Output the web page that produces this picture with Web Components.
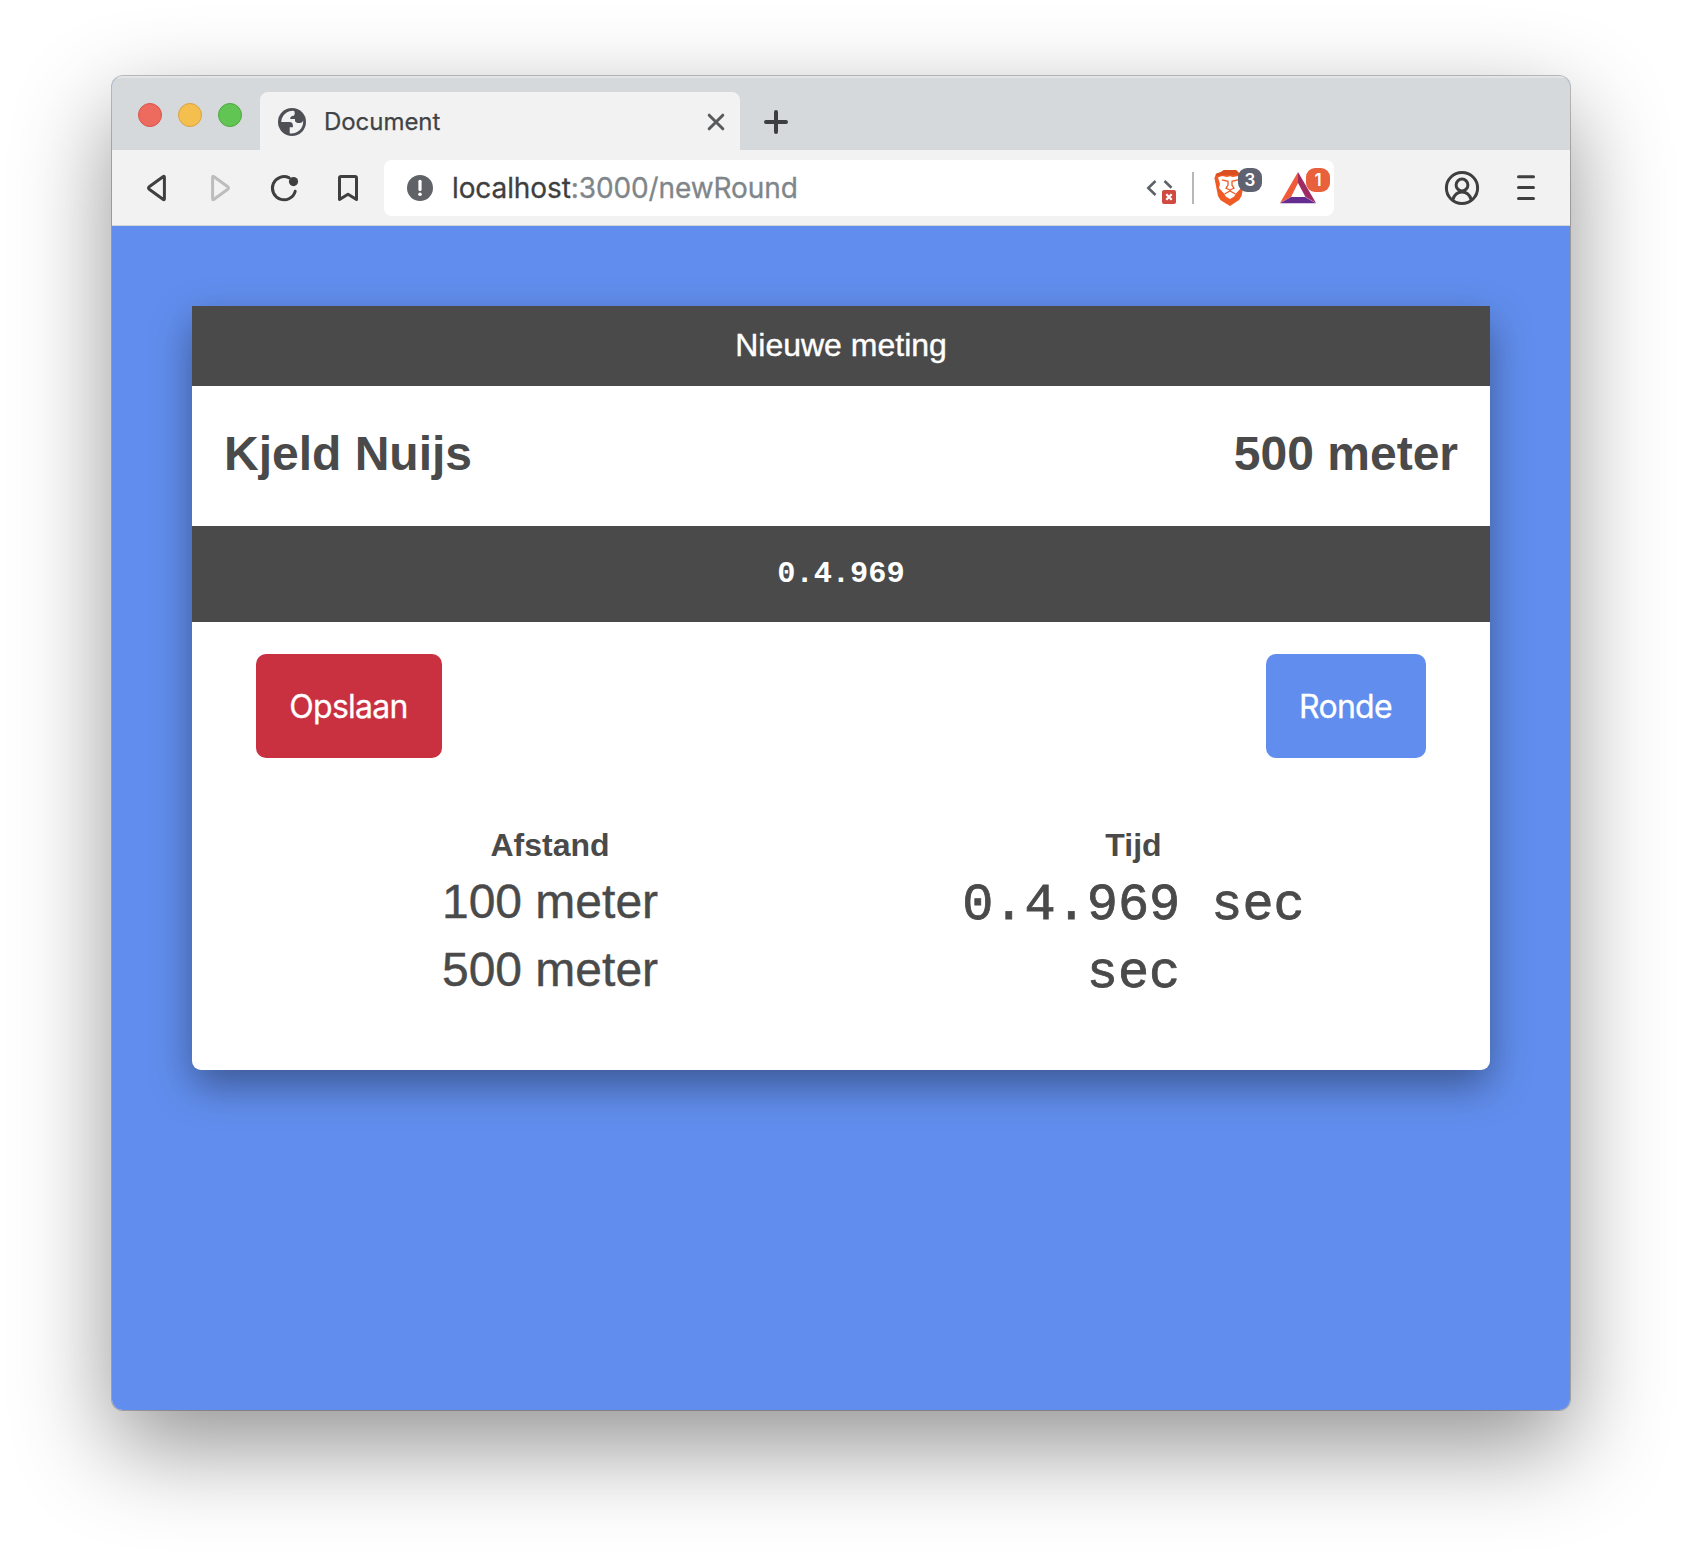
<!DOCTYPE html>
<html lang="nl">
<head>
<meta charset="utf-8">
<title>Document</title>
<style>
body{margin:0;background:#fff;font-family:"Liberation Sans",Arial,sans-serif}
</style>
</head>
<body>
<browser-window>
  <title-bar slot="chrome"><browser-tab>Document</browser-tab></title-bar>
  <tool-bar slot="chrome"><address-field host="localhost" path=":3000/newRound"></address-field></tool-bar>
  <round-card heading="Nieuwe meting" skater="Kjeld Nuijs" distance="500 meter" time="0.4.969">
    <action-button slot="actions" style="--w:186px;--bg:#c93141;--ls:-.75px">Opslaan</action-button>
    <action-button slot="actions" style="--w:160px;--bg:#618eee;--ls:-.7px">Ronde</action-button>
    <lap-table slot="laps"></lap-table>
  </round-card>
</browser-window>
<script>
const define=(name,html)=>customElements.define(name,class extends HTMLElement{
  constructor(){
    super();
    const t=document.createElement('template');
    t.innerHTML='<style>*{box-sizing:border-box}svg{display:block;flex:none}</style>'+html;
    this.attachShadow({mode:'open'}).append(t.content.cloneNode(true));
  }
  connectedCallback(){
    this.shadowRoot.querySelectorAll('[data-attr]').forEach(e=>{e.textContent=this.getAttribute(e.dataset.attr)});
  }
});

define('browser-window',`<style>
:host{display:block;height:1558px;padding:76px 112px 0;overflow:hidden;box-sizing:border-box}
.w{height:1334px;width:1458px;border-radius:11px;box-shadow:0 0 0 1px rgba(0,0,0,.23),0 36px 96px rgba(0,0,0,.43)}
.in{height:100%;border-radius:11px;overflow:hidden;background:#618eee;display:flex;flex-direction:column}
.page{padding:80px 80px 0}
</style><div class="w"><div class="in"><slot name="chrome"></slot><div class="page"><slot></slot></div></div></div>`);

define('title-bar',`<style>
:host{display:flex;height:74px;background:#d5d9dc;box-shadow:inset 0 2px 0 #e2e5e6;flex:none}
.lights{display:flex;gap:16px;padding:27px 18px 0 26px}
.lights i{width:24px;height:24px;border-radius:50%;border:1px solid}
.plus{margin:34px 0 0 24px}
</style>
<div class="lights"><i style="background:#ec6a5e;border-color:#d9544a"></i><i style="background:#f5bf4f;border-color:#d9a33e"></i><i style="background:#61c554;border-color:#50a73f"></i></div>
<slot></slot>
<svg class="plus" width="24" height="24" viewBox="0 0 24 24"><path d="M12 2v20M2 12h20" stroke="#3c3e41" stroke-width="4" stroke-linecap="round"/></svg>`);

define('browser-tab',`<style>
:host{display:flex;align-items:center;width:480px;height:58px;margin-top:16px;padding:2px 15px 0 18px;box-sizing:border-box;background:#f2f2f2;border-radius:8px 8px 0 0;font:24px/56px Inter,sans-serif;letter-spacing:-.05px;color:#414346}
span{flex:1;margin-left:18px;-webkit-text-stroke:.25px}
</style>
<svg width="28" height="28" viewBox="0 0 28 28"><circle cx="14" cy="14" r="14" fill="#4e5056"/><path d="M16.300 2.900a11.300 11.300 0 0 0-12.500 7.600l-.6 3.600h8.500q3.100.2 3.200 3.300v1.900h-3.200v5.900a11.500 11.500 0 0 0 13.500-11.600l-.1-1-.9 1.600-2 .8h-3.100l-2.100-1.700V11h-4.900q0-2.500 2-3.100l1.700-.2 1-1.600z" fill="#f2f2f2"/></svg>
<span><slot></slot></span>
<svg width="18" height="18" viewBox="0 0 18 18"><path d="M2.200 2.200 15.800 15.800M15.800 2.200 2.200 15.800" stroke="#57595b" stroke-width="3" stroke-linecap="round"/></svg>`);

define('tool-bar',`<style>
:host{display:flex;align-items:center;height:76px;background:#f2f2f2;border-bottom:1px solid #d3d6d9;padding:1px 0 0 32px;box-sizing:border-box;flex:none}
svg{fill:none;stroke:#3f3f3f;stroke-width:3;stroke-linejoin:round;stroke-linecap:round}
</style>
<svg width="24" height="40" viewBox="144 168 24 40"><path d="M164.400 177.300V198.700Q164.400 200.400 163 199.300L149.200 189.200Q147.800 188 149.200 186.800L163 176.700Q164.400 175.600 164.400 177.300Z"/></svg>
<svg style="margin-left:40px;stroke:#bdbdbd" width="24" height="40" viewBox="208 168 24 40"><path d="M212.600 177.300V198.700Q212.600 200.400 214 199.300L227.800 189.200Q229.200 188 227.800 186.800L214 176.700Q212.600 175.600 212.600 177.300Z"/></svg>
<svg style="margin-left:36px" width="34" height="40" viewBox="268 168 34 40"><path d="M289.200 177.800A11.600 11.600 0 1 0 295.200 191.300"/><circle cx="293.500" cy="181.600" r="4.600" fill="#3f3f3f" stroke="none"/></svg>
<svg style="margin-left:34px" width="24" height="40" viewBox="336 168 24 40"><path d="M341 176.500H355Q356.500 176.500 356.500 178V199.500L348 194.200L339.500 199.500V178Q339.500 176.500 341 176.500Z"/></svg>
<slot></slot>
<svg style="margin-left:110px" width="36" height="40" viewBox="1444 168 36 40"><circle cx="1462" cy="188" r="15.600"/><circle cx="1462" cy="185" r="5.900"/><path d="M1452.800 199.800Q1455 192 1462 192T1471.200 199.800"/></svg>
<svg style="margin-left:34px" width="24" height="40" viewBox="1514 168 24 40"><path d="M1518.500 176.700H1533.500M1518.500 187.500H1533.500M1518.500 198.400H1533.500"/></svg>`);

define('address-field',`<style>
:host{display:flex;align-items:center;width:950px;height:56px;margin-left:24px;padding-left:22px;box-sizing:border-box;background:#fff;border-radius:8px;font:28px/56px Inter,sans-serif;color:#3f3f3f}
.url{flex:1;margin-left:18px;white-space:nowrap;letter-spacing:-.1px;-webkit-text-stroke:.3px}.url b{font-weight:400;color:#7f868a}
.sep{width:2px;height:32px;background:#b8b8b8;margin:0 20px 0 16px}
.x{position:relative;height:40px}
.badge{position:absolute;top:0;width:24px;height:24px;border-radius:9px;color:#fff;font:600 17px/25px Inter,sans-serif;text-align:center}
</style>
<svg width="28" height="40" viewBox="406 168 28 40"><circle cx="420" cy="188" r="13" fill="#5f6368"/><path d="M420 181.300V189.500" stroke="#fff" stroke-width="3.200" stroke-linecap="round"/><circle cx="420" cy="194.200" r="1.800" fill="#fff"/></svg>
<div class="url"><span data-attr="host"></span><b data-attr="path"></b></div>
<svg width="32" height="40" viewBox="1144 168 32 40"><path d="M1155.500 181 1148.300 188 1155.500 195M1164.500 181 1171.500 187.800" fill="none" stroke="#5f6368" stroke-width="2.600"/><rect x="1162" y="190" width="14" height="14" rx="2" fill="#cf4a40"/><path d="M1166.300 194.300 1171.700 199.700M1171.700 194.300 1166.300 199.700" stroke="#fff" stroke-width="2.300"/></svg>
<div class="sep"></div>
<div class="x"><svg width="50" height="40" viewBox="1214 168 50 40">
<path d="M1221 172 1224 170H1236L1239 173 1243 173 1245 179 1241.500 196Q1240 200 1236 202L1230 206 1223.500 202Q1219.500 200 1218 196L1214.400 178 1216 174Z" fill="#f05a24"/>
<path d="M1221 172 1224 170H1236L1239 173 1236 175H1223L1217 176 1215.500 174Z" fill="#d94f1e"/>
<path d="M1218 177.500 1222 176 1227 177 1230 176.300 1233 177 1238 176 1242 177.500 1240 184 1241 188 1236 193.500 1234 196.800 1230 199 1226 196.800 1224 193.500 1219 188 1220 184Z" fill="#fff"/>
<path d="M1222 179.800 1228 181.300V185L1226 188.300 1229 189.500 1230 190.500 1231 189.500 1234 188.300 1232 185V181.300L1238 179.800M1224.500 194 1230 190.900 1235.500 194" fill="none" stroke="#f05a24" stroke-width="1.300"/></svg><span class="badge" style="left:24px;background:#5f6270">3</span></div>
<div class="x" style="margin:0 4px 0 15px"><svg width="51" height="40" viewBox="1279 168 51 40"><path d="M1298 172V183L1291 197 1280 203Z" fill="#f15a38"/><path d="M1298 172 1316 203 1305.500 197 1298 183Z" fill="#9e2c63"/><path d="M1280 203.300 1291 197H1305L1316 203.300Z" fill="#662d91"/></svg><span class="badge" style="left:27px;background:#e9603c">1</span></div>`);

define('round-card',`<style>
:host{display:block;width:1298px;height:764px;background:#fff;color:#4a4a4a;border-radius:0 0 9px 9px;box-shadow:0 16px 40px rgba(0,0,0,.38)}
header,.time{background:#4a4a4a;color:#fff;text-align:center}
header{height:80px;font-size:32px;line-height:78px;-webkit-text-stroke:.4px}
.who{display:flex;justify-content:space-between;height:140px;padding:0 32px;font-size:48px;font-weight:700;line-height:135px}
.time{height:96px;font:700 30.4px/96px "Liberation Mono",monospace}
.actions{display:flex;justify-content:space-between;padding:32px 64px 65px}
</style><header data-attr="heading"></header>
<div class="who"><span data-attr="skater"></span><span data-attr="distance"></span></div>
<div class="time" data-attr="time"></div>
<div class="actions"><slot name="actions"></slot></div><slot name="laps"></slot>`);

define('action-button',`<style>
:host{display:block}
button{display:block;width:var(--w);height:104px;padding:0;border:0;border-radius:10px;background:var(--bg);color:#fff;font:32px/106px Inter,sans-serif;letter-spacing:var(--ls);text-align:center;text-indent:-1px;-webkit-text-stroke:.3px}
</style><button><slot></slot></button>`);

define('lap-table',`<style>
:host{display:grid;grid-template-columns:588px 579px;grid-template-rows:44px 68px 68px;padding-left:64px;text-align:center}
b{font-size:32px;line-height:44px}
span{font-size:48px;line-height:70px;-webkit-text-stroke:.4px}
.m{font:51.900px/78px "Liberation Mono",monospace;-webkit-text-stroke:.8px}
</style><b>Afstand</b><b>Tijd</b><span>100 meter</span><span class="m">0.4.969 sec</span><span>500 meter</span><span class="m">sec</span>`);
</script>
</body>
</html>
